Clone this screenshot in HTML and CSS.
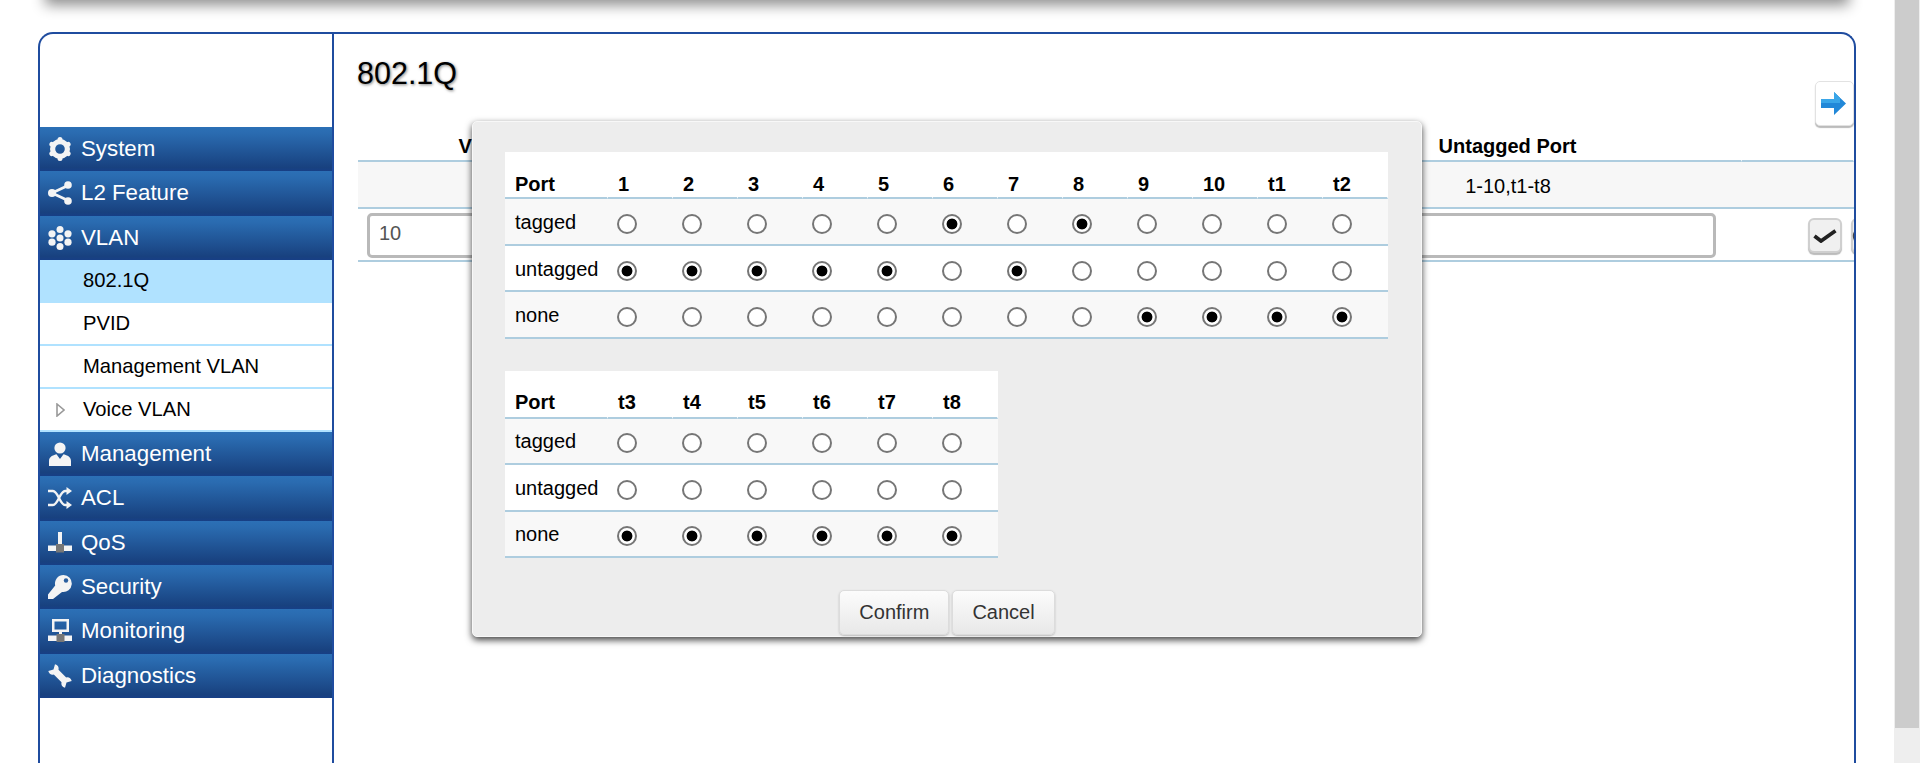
FILE: index.html
```html
<!DOCTYPE html>
<html lang="en">
<head>
<meta charset="utf-8">
<title>802.1Q</title>
<link rel="stylesheet" href="styles.css">
</head>
<body>
<div class="page">
  <div class="content">
    <div class="topbar"></div>
    <div class="frame">
      <nav class="sidebar">
        <a class="menu"><svg class="ico" viewBox="0 0 24 24"><circle cx="12" cy="12" r="7.4" fill="none" stroke="#f4f4f4" stroke-width="5.2"/><path d="M12 2.600v1.600M12 19.800v1.600M3.900 7.300l1.400.8M18.700 15.900l1.400.8M3.900 16.700l1.400-.8M18.700 8.100l1.400-.8" fill="none" stroke="#f4f4f4" stroke-width="5" stroke-linecap="round"/></svg>System</a>
        <a class="menu"><svg class="ico" viewBox="0 0 24 24"><path d="M20 4.500L4 12l16 7.500" fill="none" stroke="#f4f4f4" stroke-width="2.800"/><circle cx="20" cy="4" r="3.800"/><circle cx="4" cy="12" r="4"/><circle cx="20" cy="20" r="3.800"/></svg>L2 Feature</a>
        <a class="menu"><svg class="ico" viewBox="0 0 24 24"><circle cx="12" cy="12" r="3.500"/><circle cx="12" cy="3.500" r="3.500"/><circle cx="12" cy="20.500" r="3.500"/><circle cx="4" cy="7.800" r="3.600"/><circle cx="20" cy="7.800" r="3.600"/><circle cx="4" cy="16.200" r="3.600"/><circle cx="20" cy="16.200" r="3.600"/></svg>VLAN</a>
        <a class="sub sub-active">802.1Q</a>
        <a class="sub">PVID</a>
        <a class="sub">Management VLAN</a>
        <a class="sub sub-tree"><svg class="tri" viewBox="0 0 9 14"><path d="M1 1l7 6-7 6z" fill="#fff" stroke="#999" stroke-width="1.600"/></svg>Voice VLAN</a>
        <a class="menu"><svg class="ico" viewBox="0 0 24 24"><circle cx="12" cy="6" r="5.600"/><path d="M1 24v-5c0-5 5-6 7.500-6.800L12 17l3.500-4.800C18 13 23 14 23 19v5z"/></svg>Management</a>
        <a class="menu"><svg class="ico" viewBox="0 0 24 24"><path d="M0 5h5c5 0 7 14 12 14h3M0 19h5c5 0 7-14 12-14h3" fill="none" stroke="#f4f4f4" stroke-width="2.400"/><path d="M18.500 1l5.500 4-5.500 4zM18.500 15l5.500 4-5.500 4z"/></svg>ACL</a>
        <a class="menu"><svg class="ico" viewBox="0 0 24 24"><path d="M10 1h4v13h-4zM0 14.500h24v5.500H0z"/><path d="M8 13h8v8.500H8z" fill="#777"/></svg>QoS</a>
        <a class="menu"><svg class="ico" viewBox="0 0 24 24"><path d="M15.500 0a8.500 8.500 0 1 1-1.500 16.900L5 24H0v-4.500L7.200 10.500A8.500 8.500 0 0 1 15.500 0z"/><circle cx="18" cy="5.500" r="2.200" fill="#2a5f9f"/></svg>Security</a>
        <a class="menu"><svg class="ico" viewBox="0 0 24 24"><path d="M4 0h17v13H4zM6.500 2.500v8h12v-8zM11 13h3v3h-3zM0 16.500h24V22H0z" fill-rule="evenodd"/><path d="M8.500 15h8v8h-8z" fill="#777"/></svg>Monitoring</a>
        <a class="menu"><svg class="ico" viewBox="0 0 24 24"><path d="M7 .3C9.800 1 11.200 3.300 10.500 5.800L18.200 13.500C20.700 12.800 23 14.200 23.700 17L18.500 18.500 17 23.700C14.200 23 12.800 20.700 13.500 18.200L5.800 10.500C3.300 11.200 1 9.800 .3 7L5.500 5.500z"/></svg>Diagnostics</a>
      </nav>
      <main class="main">
        <div class="titlebar">
          <h1 class="title">802.1Q</h1>
          <button class="arrow-btn" type="button"><svg class="arrow" viewBox="0 0 25 23"><path d="M0 7h13V0l12 11.500L13 23v-7H0z" fill="#2288d8"/><path d="M0 7h13V0l6 5.700V11H0z" fill="#3aa6e8"/></svg></button>
        </div>
        <table class="vlan-table">
          <colgroup><col class="c1"><col class="c2"><col class="c3"><col class="c4"><col class="c5"></colgroup>
          <thead>
            <tr><th>VLAN ID</th><th></th><th></th><th>Untagged Port</th><th></th></tr>
          </thead>
          <tbody>
            <tr class="row-a"><td></td><td></td><td></td><td>1-10,t1-t8</td><td></td></tr>
            <tr class="row-b">
              <td colspan="4" class="input-cell"><input class="text-input" type="text" value="10"></td>
              <td class="action-cell">
                <div class="actions">
                  <button class="act" type="button"><svg class="check" viewBox="0 0 24 14"><path d="M1.500 7L8 12 22.500 1.800" fill="none" stroke="#222" stroke-width="3.800"/></svg></button>
                  <button class="act act-cut" type="button"><svg class="check" viewBox="0 0 24 24"><circle cx="12" cy="12" r="10" fill="#444"/></svg></button>
                </div>
              </td>
            </tr>
          </tbody>
        </table>
      </main>
    </div>
  </div>
  <div class="scrollbar"><div class="thumb"></div></div>
</div>

<div class="modal">
  <table class="port-table table-a">
    <thead><tr><th class="lab">Port</th><th>1</th><th>2</th><th>3</th><th>4</th><th>5</th><th>6</th><th>7</th><th>8</th><th>9</th><th>10</th><th>t1</th><th>t2</th></tr></thead>
    <tbody>
      <tr class="shade"><td class="lab">tagged</td>
        <td><input type="radio" name="p1"></td><td><input type="radio" name="p2"></td><td><input type="radio" name="p3"></td><td><input type="radio" name="p4"></td><td><input type="radio" name="p5"></td><td><input type="radio" name="p6" checked></td><td><input type="radio" name="p7"></td><td><input type="radio" name="p8" checked></td><td><input type="radio" name="p9"></td><td><input type="radio" name="p10"></td><td><input type="radio" name="p11"></td><td><input type="radio" name="p12"></td></tr>
      <tr class="mid"><td class="lab">untagged</td>
        <td><input type="radio" name="p1" checked></td><td><input type="radio" name="p2" checked></td><td><input type="radio" name="p3" checked></td><td><input type="radio" name="p4" checked></td><td><input type="radio" name="p5" checked></td><td><input type="radio" name="p6"></td><td><input type="radio" name="p7" checked></td><td><input type="radio" name="p8"></td><td><input type="radio" name="p9"></td><td><input type="radio" name="p10"></td><td><input type="radio" name="p11"></td><td><input type="radio" name="p12"></td></tr>
      <tr class="shade"><td class="lab">none</td>
        <td><input type="radio" name="p1"></td><td><input type="radio" name="p2"></td><td><input type="radio" name="p3"></td><td><input type="radio" name="p4"></td><td><input type="radio" name="p5"></td><td><input type="radio" name="p6"></td><td><input type="radio" name="p7"></td><td><input type="radio" name="p8"></td><td><input type="radio" name="p9" checked></td><td><input type="radio" name="p10" checked></td><td><input type="radio" name="p11" checked></td><td><input type="radio" name="p12" checked></td></tr>
    </tbody>
  </table>
  <table class="port-table table-b">
    <thead><tr><th class="lab">Port</th><th>t3</th><th>t4</th><th>t5</th><th>t6</th><th>t7</th><th>t8</th></tr></thead>
    <tbody>
      <tr class="shade"><td class="lab">tagged</td>
        <td><input type="radio" name="q1"></td><td><input type="radio" name="q2"></td><td><input type="radio" name="q3"></td><td><input type="radio" name="q4"></td><td><input type="radio" name="q5"></td><td><input type="radio" name="q6"></td></tr>
      <tr class="mid"><td class="lab">untagged</td>
        <td><input type="radio" name="q1"></td><td><input type="radio" name="q2"></td><td><input type="radio" name="q3"></td><td><input type="radio" name="q4"></td><td><input type="radio" name="q5"></td><td><input type="radio" name="q6"></td></tr>
      <tr class="shade"><td class="lab">none</td>
        <td><input type="radio" name="q1" checked></td><td><input type="radio" name="q2" checked></td><td><input type="radio" name="q3" checked></td><td><input type="radio" name="q4" checked></td><td><input type="radio" name="q5" checked></td><td><input type="radio" name="q6" checked></td></tr>
    </tbody>
  </table>
  <div class="modal-actions">
    <button class="btn" type="button">Confirm</button>
    <button class="btn" type="button">Cancel</button>
  </div>
</div>
</body>
</html>
```

FILE: styles.css
```css
* { box-sizing: border-box; }
html, body { margin: 0; padding: 0; height: 100%; overflow: hidden; background: #fff; }
body { font-family: "Liberation Sans", Arial, sans-serif; font-size: 20px; color: #000; position: relative; }

.page { display: flex; height: 763px; overflow: hidden; }
.content { width: 1894px; flex: none; }
.scrollbar { flex: 1; background: #eeeeee; padding-left: 1px; padding-right: 1px; }
.thumb { height: 728px; background: #cccccc; }

.topbar {
  height: 20px;
  margin: -26px 48px 0 48px;
  background: #999;
  box-shadow: 0 8px 14px 3px rgba(0, 0, 0, .45);
}

.frame {
  display: flex;
  margin: 38px 0 0 38px;
  width: 1818px;
  height: 760px;
  border: 2px solid #1f4c9f;
  border-bottom: 0;
  border-radius: 15px 15px 0 0;
  overflow: hidden;
}

.sidebar { width: 294px; flex: none; padding-top: 93px; border-right: 2px solid #1f4c9f; }
.menu {
  display: flex;
  align-items: center;
  gap: 9px;
  height: 44.33px;
  padding-left: 8px;
  font-size: 22.3px;
  color: #fff;
  background: linear-gradient(#2c70b6, #2a6bb0 15%, #18417f 92%, #173f86);
}
.ico { width: 24px; height: 24px; flex: none; fill: #f4f4f4; filter: blur(.4px); }
.sub {
  display: block;
  height: 43px;
  padding-left: 43px;
  font-size: 20.2px;
  line-height: 41px;
  border-bottom: 2px solid #b0e2ff;
  background: #fff;
}
.sub-active { background: #b0e2ff; }
.sub-tree { position: relative; }
.tri { position: absolute; left: 16px; top: 14px; width: 9px; height: 14px; }

.main { flex: 1; min-width: 0; padding: 21px 0 0 24px; overflow: hidden; }
.titlebar { display: flex; justify-content: space-between; height: 71px; }
.title {
  margin: 0 0 0 -1px;
  font-size: 30.5px;
  line-height: 36px;
  font-weight: normal;
  text-shadow: 1px 1px 3px rgba(0, 0, 0, .5);
}
.arrow-btn {
  align-self: flex-end;
  width: 39px;
  height: 45px;
  padding: 0 0 0 5px;
  display: flex;
  align-items: center;
  justify-content: flex-start;
  background: #fff;
  border: 1px solid #e2e2e2;
  border-radius: 5px;
  box-shadow: 0 2px 1px #bbb;
}
.arrow { width: 25px; height: 23px; }

.vlan-table { width: 1496px; table-layout: fixed; border-collapse: separate; border-spacing: 0; }
.c1 { width: 282px; }
.c2, .c3 { width: 317px; }
.c4 { width: 468px; }
.c5 { width: 112px; }
.vlan-table th {
  height: 36px;
  padding: 0 0 2px;
  vertical-align: bottom;
  font-size: 20px;
  line-height: 23px;
  border-bottom: 2px solid #aecddf;
  border-right: 1px solid #fff;
}
.vlan-table td { padding: 0; text-align: center; border-bottom: 2px solid #aecddf; }
.row-a td { height: 47px; padding-top: 4px; background: #f7f7f7; }
.row-b td { height: 53px; vertical-align: top; }
.vlan-table .input-cell { padding: 4px 26px 0 9px; }
.text-input {
  display: block;
  width: 100%;
  height: 45px;
  padding: 0 8px 4px 9px;
  font: 20px "Liberation Sans", Arial, sans-serif;
  color: #555;
  background: #fff;
  border: 3px solid #b9b9b9;
  border-radius: 5px;
  outline: 0;
}
.vlan-table .action-cell { padding: 9px 0 0 66px; }
.actions { display: flex; gap: 9px; width: 77px; }
.act {
  flex: none;
  width: 34px;
  height: 35px;
  padding: 0;
  display: flex;
  align-items: center;
  justify-content: center;
  background: #f0f0f0;
  border: 2px solid #cfcfcf;
  border-radius: 6px;
  box-shadow: 0 2px 1px #bbb;
}
.check { width: 24px; height: 14px; flex: none; }
.act-cut { justify-content: flex-start; }
.act-cut .check { height: 22px; margin-left: -3px; }

.modal {
  position: absolute;
  left: 472px;
  top: 121px;
  width: 950px;
  height: 516px;
  padding: 30px 0 0 32px;
  background: #ededed;
  border: 1px solid #f8f8f8;
  border-radius: 5px;
  box-shadow: 0 3px 7px rgba(0, 0, 0, .75);
}
.port-table {
  table-layout: fixed;
  border-collapse: separate;
  border-spacing: 0;
  background: #fff;
  margin-bottom: 32px;
}
.port-table th {
  width: 65px;
  padding: 0 0 2px 10px;
  vertical-align: bottom;
  text-align: left;
  font-size: 20px;
  line-height: 23px;
  border-bottom: 2px solid #aecddf;
  border-right: 1px solid #fff;
}
.port-table td {
  width: 65px;
  padding: 5px 0 0 9px;
  vertical-align: middle;
  border-bottom: 2px solid #aecddf;
}
.port-table .lab { width: 103px; }
.port-table td.lab { padding: 2px 0 0 10px; }
.table-a th { height: 47px; padding-bottom: 1px; }
.table-a td { height: 47px; }
.table-a .mid td { height: 46px; }
.table-b th { height: 48px; padding-bottom: 3px; }
.table-b td { height: 46px; padding-top: 4px; }
.table-b td.lab { padding-top: 1px; }
.table-b .mid td { height: 47px; }
.shade td { background: #f8f8f8; }

input[type="radio"] {
  appearance: none;
  -webkit-appearance: none;
  display: block;
  width: 20px;
  height: 20px;
  margin: 0;
  background: #fff;
  border: 2px solid #767676;
  border-radius: 50%;
}
input[type="radio"]:checked {
  background: radial-gradient(circle, #000 0, #000 5px, #fff 5.800px);
}

.modal-actions { display: flex; justify-content: center; gap: 3px; margin-left: -32px; }
.btn {
  height: 45px;
  padding: 0 19px;
  font: 20px "Liberation Sans", Arial, sans-serif;
  color: #333;
  background: linear-gradient(#fcfcfc, #e8e8e8);
  border: 1px solid #dcdcdc;
  border-radius: 5px;
  box-shadow: 0 1px 2px #bbb;
}
```
